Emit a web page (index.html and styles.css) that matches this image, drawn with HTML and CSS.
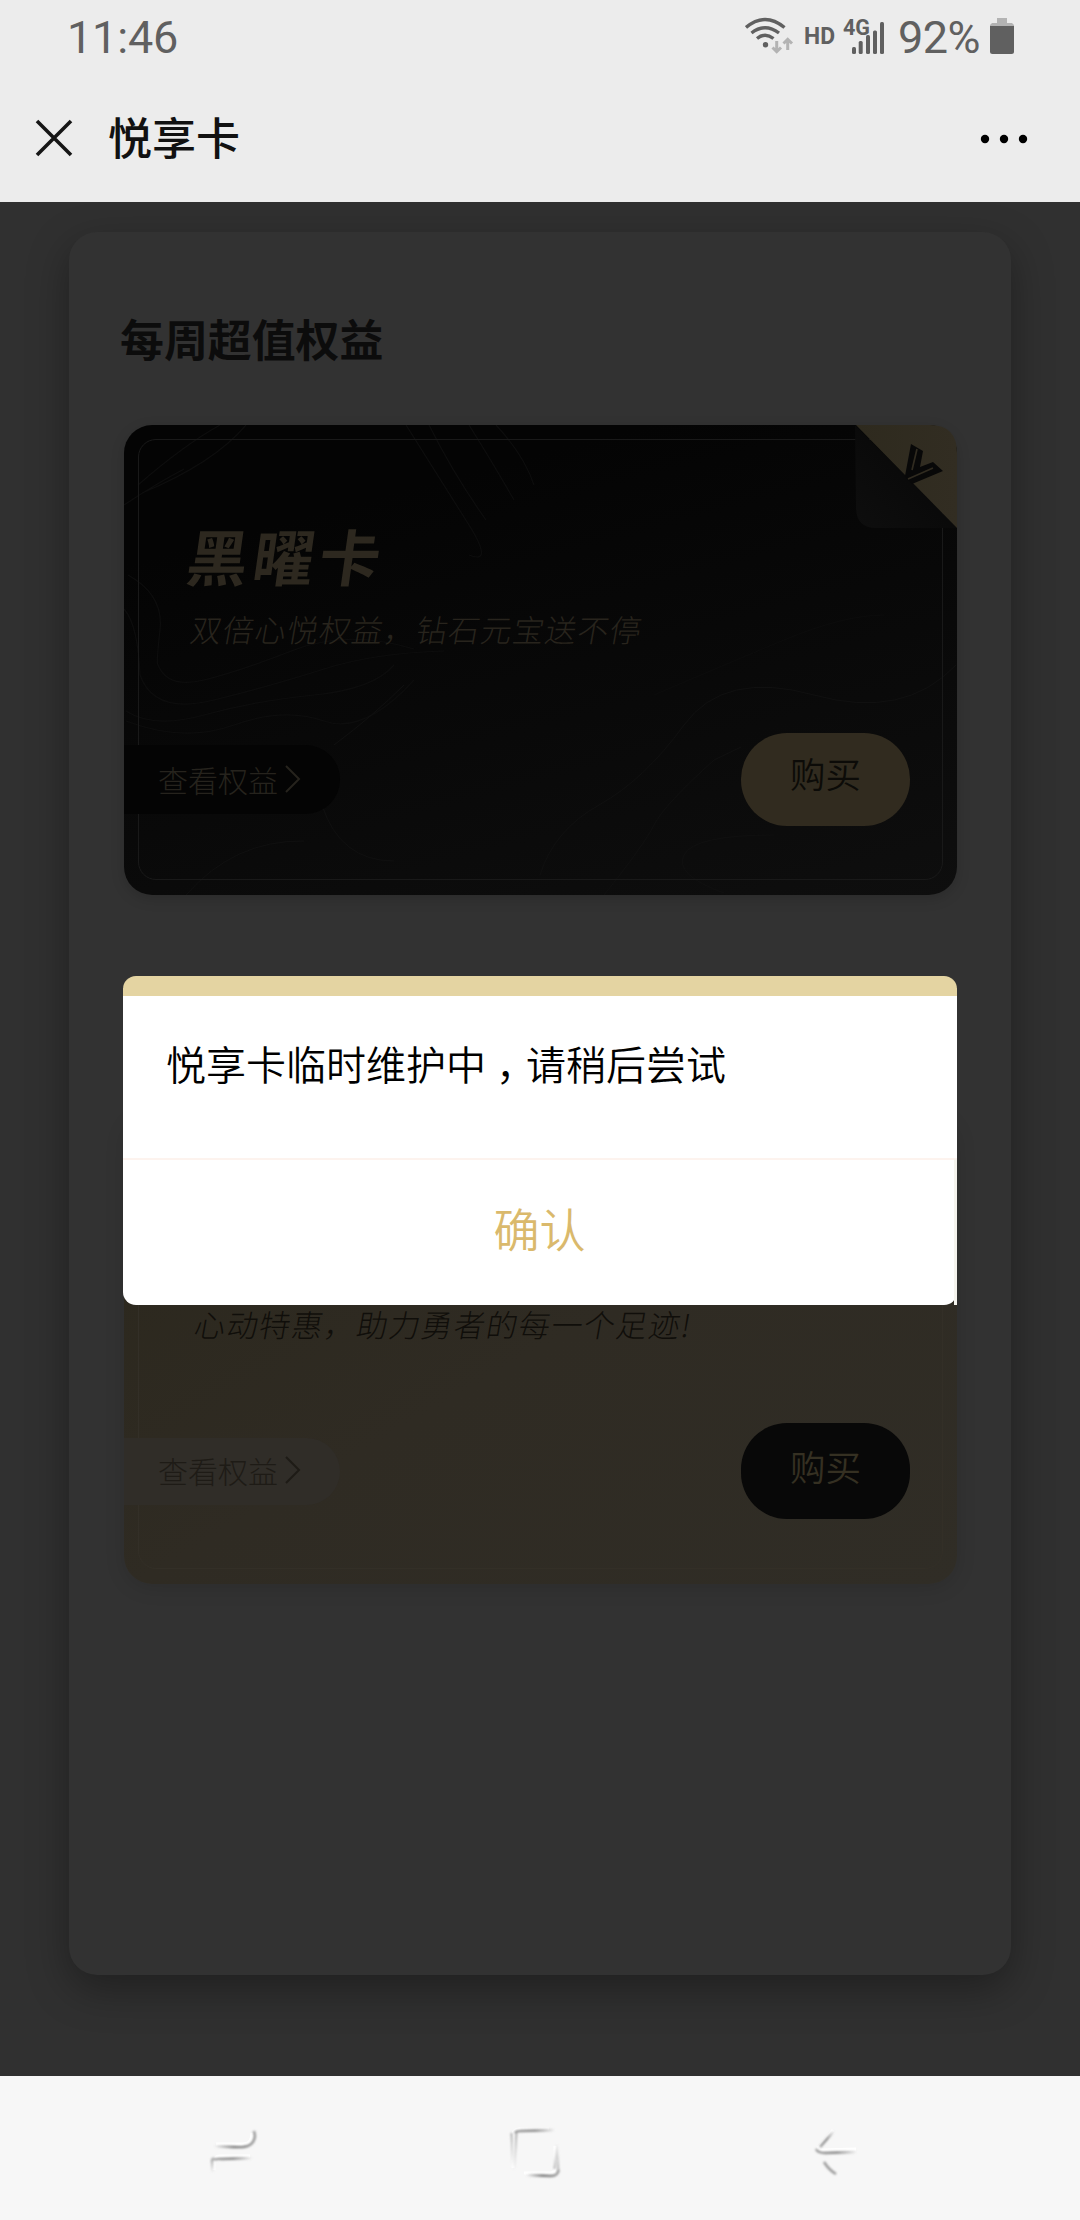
FILE: index.html
```html
<!DOCTYPE html>
<html lang="zh-CN">
<head>
<meta charset="utf-8">
<title>悦享卡</title>
<link rel="stylesheet" href="styles.css">
</head>
<body>
<div class="screen">
  <header class="top">
    <div class="status">
      <span class="clock">11:46</span>
      <svg class="status-icons" width="140" height="60" viewBox="744 0 140 60">
        <g fill="none" stroke="#606060" stroke-width="3.4">
          <path d="M745 27.5Q764 11.500 783.500 27.500"/>
          <path d="M750.500 33Q764 22.500 778 33"/>
          <path d="M756 38.500Q764 32 772.500 38.500"/>
        </g>
        <circle cx="764.500" cy="44.700" r="2.700" fill="#606060"/>
        <g fill="none" stroke="#b3b3b3" stroke-width="3">
          <path d="M775.700 41V51M771.500 47.500L775.700 51.700L780 47.500"/>
          <path d="M786.700 50V40M782.500 43.500L786.700 39.300L791 43.500"/>
        </g>
        <text class="badge" x="803" y="43.500" font-size="23.500" textLength="31" lengthAdjust="spacingAndGlyphs">HD</text>
        <text class="badge" x="842" y="34.700" font-size="21.500">4G</text>
        <g fill="#606060">
          <rect x="851" y="47" width="4" height="7" rx="1.500"/>
          <rect x="857.700" y="41" width="4" height="13" rx="1.500"/>
          <rect x="865" y="35" width="4" height="19" rx="1.500"/>
          <rect x="872" y="30.500" width="4" height="23.500" rx="1.500"/>
          <rect x="879" y="22" width="4" height="32" rx="1.500"/>
        </g>
      </svg>
      <span class="percent">92%</span>
      <svg class="battery" width="24" height="36" viewBox="0 0 24 36">
        <path d="M7 0h10v5h5l2 2v1H0V7l2-2h5z" fill="#b3b3b3"/>
        <path d="M0 8h24v25.500q0 2.500-2.500 2.500h-19Q0 36 0 33.500z" fill="#606060"/>
      </svg>
    </div>
    <div class="titlebar">
      <svg class="close" width="40" height="40" viewBox="0 0 40 40"><path d="M3 3L37 37M37 3L3 37" stroke="#161616" stroke-width="3.600"/></svg>
      <h1 class="title">悦享卡</h1>
      <svg class="more" width="48" height="10" viewBox="0 0 48 10"><circle cx="5" cy="5" r="4.200"/><circle cx="24" cy="5" r="4.200"/><circle cx="43" cy="5" r="4.200"/></svg>
    </div>
  </header>

  <main class="page">
    <section class="panel">
      <h2 class="heading">每周超值权益</h2>

      <article class="card card-dark">
        <svg class="contours" width="833" height="470" viewBox="0 0 833 470">
          <g fill="none" stroke="#0d0d0d" stroke-width="1.200">
            <path d="M14 60Q60 20 96 0M18 68Q90 38 122 0M0 80Q30 60 60 44"/>
            <path d="M282 0Q320 60 345 100T345 130M305 0Q330 50 362 95M345 0Q370 40 390 75M372 0Q400 30 410 60"/>
            <path d="M4 150Q40 170 36 205T34 240Q44 264 80 255T170 225T290 224"/>
            <path d="M0 184Q14 200 16 250Q30 290 90 275T200 244T320 226"/>
            <path d="M2 286Q30 304 80 290T190 270T270 240"/>
            <path d="M2 296Q60 318 110 300T200 296T290 255"/>
          </g>
          <g fill="none" stroke="#101010" stroke-width="1">
            <path d="M62 470Q110 415 180 416M198 380Q216 436 270 436M210 320Q250 290 280 260"/>
            <path d="M416 450Q430 405 475 380T560 300T690 270T832 240"/>
            <path d="M480 470Q520 420 530 400T590 335L617 322M600 468Q550 450 560 430T650 410"/>
            <path d="M530 270Q600 240 660 215T760 190" stroke="#0c0c0c"/>
          </g>
        </svg>
        <div class="frame"></div>
        <svg class="fold" width="104" height="105" viewBox="0 0 104 105">
          <defs>
            <linearGradient id="foldShade" x1="0" y1="1" x2=".6" y2=".4"><stop offset="0" stop-color="#0e0e0e"/><stop offset="1" stop-color="#090909"/></linearGradient>
            <linearGradient id="foldGold" x1="0" y1="0" x2="1" y2="0"><stop offset="0" stop-color="#2e2a1e"/><stop offset="1" stop-color="#322d22"/></linearGradient>
          </defs>
          <path d="M1 0L103 103H22Q2 103 2 82z" fill="url(#foldShade)"/>
          <path d="M2 0H76Q103 0 103 28V103z" fill="url(#foldGold)"/>
          <path d="M57 19L69 26L66 42L79 37L89 46L58 59L51 51z" fill="#080808"/>
          <path d="M63 24L58 45M79 43L54 54" fill="none" stroke="#302b20" stroke-width="1.700"/>
        </svg>
        <h3 class="name">黑曜卡</h3>
        <p class="slogan">双倍心悦权益，钻石元宝送不停</p>
        <div class="actions">
          <a class="detail">查看权益<svg width="16" height="28" viewBox="0 0 16 28"><path d="M1 1L14 14L1 27" fill="none" stroke="currentColor" stroke-width="2"/></svg></a>
          <button class="buy">购买</button>
        </div>
      </article>

      <article class="card card-gold">
        <div class="frame"></div>
        <h3 class="name">心动卡</h3>
        <p class="slogan">心动特惠，助力勇者的每一个足迹!</p>
        <div class="actions">
          <a class="detail">查看权益<svg width="16" height="28" viewBox="0 0 16 28"><path d="M1 1L14 14L1 27" fill="none" stroke="currentColor" stroke-width="2"/></svg></a>
          <button class="buy">购买</button>
        </div>
      </article>
    </section>
  </main>

  <nav class="navbar">
    <svg width="1080" height="144" viewBox="0 2076 1080 144">
      <defs>
        <filter id="soft" x="-20%" y="-20%" width="140%" height="140%"><feGaussianBlur stdDeviation=".8"/></filter>
        <linearGradient id="fadeL"><stop offset="0" stop-color="#777" stop-opacity="0"/><stop offset=".5" stop-color="#777"/><stop offset="1" stop-color="#999"/></linearGradient>
        <linearGradient id="fadeR"><stop offset="0" stop-color="#999"/><stop offset=".5" stop-color="#888"/><stop offset="1" stop-color="#777" stop-opacity="0"/></linearGradient>
        <linearGradient id="fadeD" x1="0" y1="0" x2="0" y2="1"><stop offset="0" stop-color="#999"/><stop offset="1" stop-color="#aaa" stop-opacity="0"/></linearGradient>
        <linearGradient id="fadeU" x1="0" y1="0" x2="0" y2="1"><stop offset="0" stop-color="#aaa" stop-opacity="0"/><stop offset="1" stop-color="#999"/></linearGradient>
      </defs>
      <g fill="none" stroke="#fff" stroke-width="3">
        <path d="M216 2144H243Q252 2144 252 2133M214 2170V2160Q215 2156 221 2156H250"/>
        <path d="M513 2168V2134Q513 2130 519 2129H549M524 2173H550Q555 2173 555 2167V2146"/>
        <path d="M833 2130L819 2147Q817 2150 822 2150L856 2149"/>
      </g>
      <g fill="none" stroke-width="2.400" filter="url(#soft)">
        <path d="M214 2146Q232 2147.500 243 2147Q254 2146 255 2136L254 2131" stroke="url(#fadeL)"/>
        <path d="M214 2160Q215 2158.500 222 2159L252 2158" stroke="url(#fadeR)"/>
        <path d="M212.500 2173L212 2160L214 2158" stroke="url(#fadeD)"/>
        <path d="M515 2133Q516 2131 520 2131L555 2130" stroke="url(#fadeR)"/>
        <path d="M511.500 2133L513 2170" stroke="url(#fadeD)" stroke-width="1.600"/>
        <path d="M516.500 2132L514.500 2170" stroke="url(#fadeD)" stroke-width="1.600"/>
        <path d="M526 2175L551 2176Q558 2176 558.500 2170" stroke="url(#fadeL)"/>
        <path d="M557 2144L558.500 2172" stroke="url(#fadeU)" stroke-width="1.600"/>
        <path d="M557 2144L554.500 2169" stroke="url(#fadeU)" stroke-width="1.600"/>
        <path d="M834 2131L820 2147" stroke="url(#fadeR)"/>
        <path d="M816 2149Q818 2153 825 2153L857 2152" stroke="url(#fadeR)"/>
        <path d="M824 2162Q829 2170 836 2174" stroke="#999"/>
      </g>
    </svg>
  </nav>

  <div class="dialog" role="alertdialog">
    <p class="message">悦享卡临时维护中<span class="comma">，</span>请稍后尝试</p>
    <button class="confirm">确认</button>
    <i class="edge"></i>
  </div>
</div>
</body>
</html>
```
FILE: styles.css
```css
* { box-sizing: border-box; margin: 0; padding: 0; }
body { margin: 0; }
button { border: 0; background: none; font: inherit; color: inherit; }

.screen {
  position: relative;
  display: flex;
  flex-direction: column;
  width: 1080px;
  height: 2220px;
  overflow: hidden;
  font-family: "Noto Sans CJK SC", sans-serif;
  background: #303030;
}

/* status bar and title bar */
.top { height: 202px; background: #ececec; }
.status {
  display: flex;
  height: 74px;
  padding: 0 66px 0 67px;
  font-family: Roboto, sans-serif;
  font-size: 45px;
  line-height: 75px;
  color: #606060;
}
.clock { flex: 1; letter-spacing: -.2px; }
.status-icons { margin-right: 13px; }
.badge { font-family: Roboto, sans-serif; font-weight: 700; fill: #606060; }
.percent { width: 92px; letter-spacing: -.6px; }
.battery { margin-top: 18px; }
.titlebar { display: flex; align-items: center; height: 128px; padding: 0 52px 0 34px; }
.close { margin-bottom: 1px; }
.title { flex: 1; margin: -5px 0 0 34px; font-size: 44px; font-weight: 500; line-height: 64px; color: #111; }
.more { margin-top: 1px; fill: #000; }

/* page */
.page { height: 1874px; padding: 30px 69px 0; overflow: hidden; }
.panel {
  height: 1743px;
  padding: 76px 54px 0 55px;
  border-radius: 28px;
  background: #323232;
  box-shadow: 0 14px 40px rgba(0, 0, 0, .34);
}
.heading { height: 117px; margin-left: -4px; font-size: 43.900px; font-weight: 700; line-height: 60px; color: #0c0c0c; }

.card {
  position: relative;
  display: flex;
  flex-direction: column;
  height: 470px;
  padding-top: 90px;
  border-radius: 28px;
}
.card-dark { margin-bottom: 219px; background: linear-gradient(165deg, #040404 20%, #0e0e0e); box-shadow: 0 4px 14px rgba(0, 0, 0, .15); }
.card-gold { background: linear-gradient(150deg, #2b271c, #2f2b23 50%, #302d26); box-shadow: 0 4px 20px rgba(0, 0, 0, .12); }
.contours { position: absolute; inset: 0; border-radius: 28px; }
.frame { position: absolute; inset: 14px 14px 15px; border: 1.5px solid #191919; border-radius: 18px; }
.card-gold .frame { border-color: #332f27; }
.fold { position: absolute; top: 0; right: -1px; }
.name {
  margin-left: 64px;
  font-size: 61px;
  font-weight: 700;
  line-height: 80px;
  letter-spacing: 5px;
  color: #2d281f;
  transform: skewX(-8deg);
}
.slogan {
  margin: 11px 0 0 67px;
  font-size: 31px;
  font-weight: 300;
  line-height: 46px;
  letter-spacing: 1.25px;
  color: #28241d;
  transform: skewX(-10deg);
}
.card-gold .slogan { margin: 17px 0 0 71px; letter-spacing: 1.450px; color: #100e0a; }
.actions { position: relative; display: flex; justify-content: space-between; align-items: center; margin-top: 81px; padding-right: 47px; }
.card-gold .actions { margin-top: 76px; }
.detail {
  display: flex;
  align-items: center;
  gap: 7px;
  width: 216px;
  height: 69px;
  padding: 0 0 2px 34px;
  border-radius: 0 35px 35px 0;
  font-size: 30px;
  font-weight: 300;
  color: #26231d;
  background: #040404;
}
.buy {
  width: 169px;
  height: 93px;
  padding: 0 0 14px 0;
  border-radius: 46px;
  font-size: 35.500px;
  font-weight: 350;
  line-height: 79px;
  color: #0c0b08;
  background: #312b1f;
}
.card-gold .detail { height: 67px; color: #1e1b16; background: #302d28; }
.card-gold .buy { height: 96px; padding-bottom: 12px; color: #353022; background: #080808; }

/* system navigation */
.navbar { height: 144px; background: #f7f7f7; }

/* dialog over the page */
.dialog {
  position: absolute;
  top: 975.500px;
  left: 122.500px;
  display: flex;
  flex-direction: column;
  width: 834px;
  height: 329.500px;
  border-top: 20.500px solid #e4d4a2;
  border-radius: 13px;
  background: #fff;
}
.message { height: 164.500px; padding: 37px 0 0 43.500px; border-bottom: 2px solid #fdf3ee; font-size: 40px; font-weight: 350; line-height: 60px; color: #000; }
.comma { margin: 0 10px; font-feature-settings: "halt"; }
.confirm { flex: 1; padding-bottom: 11px; font-size: 46px; font-weight: 350; line-height: 60px; color: #dab96c; }
.edge { position: absolute; right: 0; bottom: 0; width: 3px; height: 146px; background: #f5f4ee; }
```
